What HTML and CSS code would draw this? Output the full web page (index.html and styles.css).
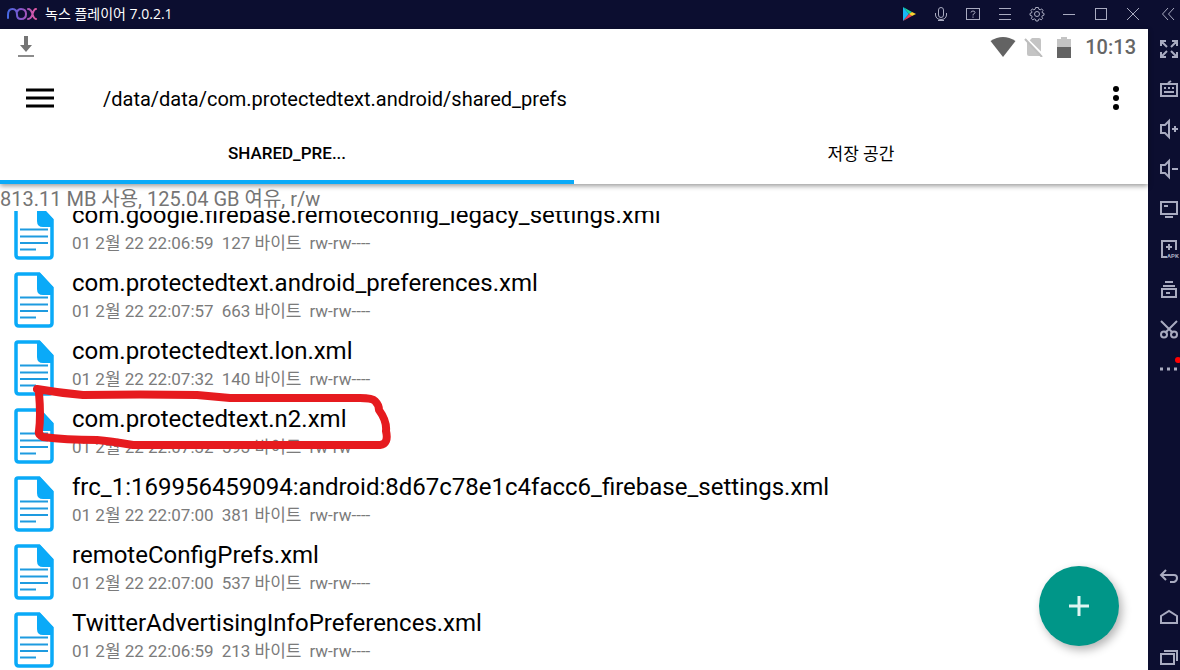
FILE: index.html
```html
<!DOCTYPE html>
<html lang="ko">
<head>
    <meta charset="UTF-8">
    <meta name="viewport" content="width=device-width, initial-scale=1.0">
    <title>녹스 플레이어</title>
    <link rel="stylesheet" href="styles.css">
</head>
<body>
    <!-- File icon shared by all rows -->
    <svg class="sprite" aria-hidden="true">
        <symbol id="file" viewBox="0 0 40 56">
            <path d="M4 2H25L38 16V51Q38 54 35 54H5Q2 54 2 51V4Q2 2 4 2Z" fill="#fff" stroke="#0aaaf8" stroke-width="3.5"/>
            <path d="M23 1H26L39 15V23H29Q23 23 23 17Z" fill="#0aaaf8"/>
            <path d="M6 25.500H34M6 32.500H34M6 39H34M6 45.500H22" stroke="#1e9be0" stroke-width="2"/>
        </symbol>
    </svg>

    <header class="titlebar">
        <svg class="logo" width="32" height="14" viewBox="0 0 32 14" fill="none" stroke="url(#nox)" stroke-width="2" stroke-linecap="round">
            <defs>
                <linearGradient id="nox" gradientUnits="userSpaceOnUse" x1="0" y1="0" x2="32" y2="0">
                    <stop offset="0" stop-color="#3f6be8"/>
                    <stop offset="0.5" stop-color="#8a55c8"/>
                    <stop offset="1" stop-color="#ee5a9c"/>
                </linearGradient>
            </defs>
            <path d="M2 11V8Q2 2 6.500 2T11 8Q11 12 15 12Q20 12 20 7T15 2Q12 2 11 5"/>
            <path d="M22 2Q25 2 26.500 7T30 12M30 2Q28 2 26.500 7T22 12"/>
        </svg>
        <h1>녹스 플레이어 7.0.2.1</h1>
        <div class="window-buttons">
            <button aria-label="Play Store">
                <svg viewBox="0 0 20 20"><path d="M4 3V17L10 10Z" fill="#18b9f5"/><path d="M4 3L13 8L10 10Z" fill="#19d6a0"/><path d="M4 17L13 12L10 10Z" fill="#ee4056"/><path d="M13 8L17 10L13 12L10 10Z" fill="#fdd42f"/></svg>
            </button>
            <button aria-label="Microphone">
                <svg viewBox="0 0 20 20"><rect x="7.500" y="3.500" width="5" height="10" rx="2.500"/><path d="M4.500 9V11Q5 15.500 10 15.500T15.500 11V9M7 16.500H13"/></svg>
            </button>
            <button aria-label="Help">
                <svg viewBox="0 0 20 20"><rect x="3.500" y="4.500" width="13" height="11"/><path d="M8 8.500Q8 7 10 7T12 8.500Q12 9.500 10 10.500V11.500M10 12.500V13.800"/></svg>
            </button>
            <button aria-label="Menu">
                <svg viewBox="0 0 20 20"><path d="M4 4.500H16M4 10.500H16M4 15.500H16"/></svg>
            </button>
            <button aria-label="Settings">
                <svg viewBox="0 0 20 20"><circle cx="10" cy="10" r="2.500"/><path d="M8.600 3.500H11.400L11.800 5.200L13.200 5.800L14.700 4.900L16 6.500L15 7.900L15.500 9L17 9.400V11.200L15.300 11.700L14.800 13L15.700 14.400L14.200 15.800L12.800 14.900L11.500 15.400L11.100 17H8.900L8.500 15.400L7.200 14.900L5.800 15.800L4.300 14.400L5.200 13L4.700 11.700L3 11.200V9.400L4.500 9L5 7.900L4 6.500L5.300 4.900L6.800 5.800L8.200 5.200Z"/></svg>
            </button>
            <button aria-label="Minimize">
                <svg viewBox="0 0 20 20"><path d="M4 10.500H16"/></svg>
            </button>
            <button aria-label="Maximize">
                <svg viewBox="0 0 20 20"><rect x="4.500" y="4.500" width="11" height="11"/></svg>
            </button>
            <button aria-label="Close">
                <svg viewBox="0 0 20 20"><path d="M4 4L16 16M16 4L4 16"/></svg>
            </button>
            <button class="collapse" aria-label="Collapse">
                <svg viewBox="0 0 20 20"><path d="M8 4L2.500 10L8 16M14 4L8.500 10L14 16"/></svg>
            </button>
        </div>
    </header>

    <div class="content">
        <main class="screen">
            <div class="appbar">
                <div class="status">
                    <svg class="download" width="18" height="24" viewBox="0 0 18 24"><path d="M7 1H11V10H15L9 17L3 10H7Z" fill="#757575"/><path d="M1 21H17" stroke="#8c8c8c" stroke-width="2"/></svg>
                    <svg class="wifi" width="26" height="20" viewBox="0 0 26 20"><path d="M0.500 4Q13 -4 25.500 4L13 20Z" fill="#636363"/></svg>
                    <svg class="nosim" width="20" height="20" viewBox="0 0 20 20"><path d="M8 1H15Q17 1 17 3V19H5Q3 19 3 17V6Z" fill="#c4c4c4"/><path d="M2 1L20 19" stroke="#fff" stroke-width="2"/><path d="M1 2L18 20" stroke="#bdbdbd" stroke-width="2"/></svg>
                    <svg class="battery" width="14" height="21" viewBox="0 0 14 21"><path d="M0 2H4V0H10V2H14V10H0Z" fill="#c4c4c4"/><path d="M0 10H14V21H0Z" fill="#636363"/></svg>
                    <time>10:13</time>
                </div>
                <div class="toolbar">
                    <button aria-label="Navigation">
                        <svg width="28" height="20" viewBox="0 0 28 20"><path d="M0 2H28M0 10H28M0 18H28" stroke="#000" stroke-width="3"/></svg>
                    </button>
                    <h2>/data/data/com.protectedtext.android/shared_prefs</h2>
                    <button aria-label="More">
                        <svg width="6" height="24" viewBox="0 0 6 24"><circle cx="3" cy="3" r="3"/><circle cx="3" cy="12" r="3"/><circle cx="3" cy="21" r="3"/></svg>
                    </button>
                </div>
                <nav class="tabs">
                    <button class="active">SHARED_PRE...</button>
                    <button>저장 공간</button>
                </nav>
            </div>

            <p class="summary">813.11 MB 사용, 125.04 GB 여유, r/w</p>

            <div class="files">
                <ul>
                    <li>
                        <svg class="file-icon"><use href="#file"/></svg>
                        <div>
                            <h3>com.google.firebase.remoteconfig_legacy_settings.xml</h3>
                            <p><span>01 2월 22 22:06:59</span><span>127 바이트</span><span>rw-rw----</span></p>
                        </div>
                    </li>
                    <li>
                        <svg class="file-icon"><use href="#file"/></svg>
                        <div>
                            <h3>com.protectedtext.android_preferences.xml</h3>
                            <p><span>01 2월 22 22:07:57</span><span>663 바이트</span><span>rw-rw----</span></p>
                        </div>
                    </li>
                    <li>
                        <svg class="file-icon"><use href="#file"/></svg>
                        <div>
                            <h3>com.protectedtext.lon.xml</h3>
                            <p><span>01 2월 22 22:07:32</span><span>140 바이트</span><span>rw-rw----</span></p>
                        </div>
                    </li>
                    <li>
                        <svg class="file-icon"><use href="#file"/></svg>
                        <div>
                            <h3>com.protectedtext.n2.xml</h3>
                            <p><span>01 2월 22 22:07:32</span><span>593 바이트</span><span>rw-rw----</span></p>
                        </div>
                        <!-- Hand-drawn marker -->
                        <svg class="marker" width="400" height="70" viewBox="0 0 400 70"><path d="M37 8Q60 12 83 14Q140 13 197 14L230 17Q290 17 360 17Q372 17 375 20Q379 24 379 29Q387 40 386 50Q389 63 380 64Q250 64 133 64Q110 60 97 59Q65 59 43 56Q38 54 39 50Q41 35 39 12"/></svg>
                    </li>
                    <li>
                        <svg class="file-icon"><use href="#file"/></svg>
                        <div>
                            <h3>frc_1:169956459094:android:8d67c78e1c4facc6_firebase_settings.xml</h3>
                            <p><span>01 2월 22 22:07:00</span><span>381 바이트</span><span>rw-rw----</span></p>
                        </div>
                    </li>
                    <li>
                        <svg class="file-icon"><use href="#file"/></svg>
                        <div>
                            <h3>remoteConfigPrefs.xml</h3>
                            <p><span>01 2월 22 22:07:00</span><span>537 바이트</span><span>rw-rw----</span></p>
                        </div>
                    </li>
                    <li>
                        <svg class="file-icon"><use href="#file"/></svg>
                        <div>
                            <h3>TwitterAdvertisingInfoPreferences.xml</h3>
                            <p><span>01 2월 22 22:06:59</span><span>213 바이트</span><span>rw-rw----</span></p>
                        </div>
                    </li>
                </ul>
            </div>

            <button class="fab" aria-label="Add">
                <svg width="20" height="20" viewBox="0 0 20 20"><path d="M10 0V20M0 10H20" stroke="#e0f5f2" stroke-width="3"/></svg>
            </button>
        </main>

        <aside class="sidebar">
            <div class="group">
                <button aria-label="Full screen">
                    <svg viewBox="0 0 20 20"><path d="M1 7V2H6M2 3L7 8M12 2H17V7M16 3L11 8M1 13V18H6M2 17L7 12M17 13V18H12M16 17L11 12"/></svg>
                </button>
                <button aria-label="Keyboard">
                    <svg viewBox="0 0 20 20"><path d="M1 5H17V17H1ZM8 4L11 2M4 9H6M8 9H10M12 9H14M4 13H14"/></svg>
                </button>
                <button aria-label="Volume up">
                    <svg viewBox="0 0 20 20"><path d="M1 6H5L9 2V18L5 14H1ZM12 10H18M15 7V13"/></svg>
                </button>
                <button aria-label="Volume down">
                    <svg viewBox="0 0 20 20"><path d="M1 6H5L9 2V18L5 14H1ZM12 10H18"/></svg>
                </button>
                <button aria-label="Screen">
                    <svg viewBox="0 0 20 20"><path d="M1 3H17V15H1ZM4 7H8M5 18H13"/></svg>
                </button>
                <button aria-label="Install APK">
                    <svg viewBox="0 0 20 20"><path d="M7 18H2V2H16V11M9 5V11M6 8H12"/><text x="7" y="19">APK</text></svg>
                </button>
                <button aria-label="Multi instance">
                    <svg viewBox="0 0 20 20"><path d="M2 10H16V18H2ZM6 14H10M3 7H15M5 3H13"/></svg>
                </button>
                <button aria-label="Screenshot">
                    <svg viewBox="0 0 20 20"><path d="M1 2L13 14M17 2L5 14"/><circle cx="4" cy="15.500" r="3"/><circle cx="14" cy="15.500" r="3"/></svg>
                </button>
                <button class="more" aria-label="More tools">
                    <svg viewBox="0 0 20 20"><path d="M0 10H3M7 10H10M14 10H17" stroke-width="3"/><circle class="dot" cx="18" cy="1" r="3"/></svg>
                </button>
            </div>
            <div class="group">
                <button aria-label="Back">
                    <svg viewBox="0 0 20 20"><path d="M6 3L1 8L6 13M1 8H14Q17 8 17 11T14 15H10"/></svg>
                </button>
                <button aria-label="Home">
                    <svg viewBox="0 0 20 20"><path d="M1 9L9 4L17 9V16H1Z"/></svg>
                </button>
                <button aria-label="Recent apps">
                    <svg viewBox="0 0 20 20"><path d="M1 7H14V17H1ZM4 4H17V14"/></svg>
                </button>
            </div>
        </aside>
    </div>
</body>
</html>
```
FILE: styles.css
```css
* {
    box-sizing: border-box;
}

body {
    display: flex;
    flex-direction: column;
    height: 100vh;
    margin: 0;
    overflow: hidden;
    background: #fff;
    font-family: Roboto, "Noto Sans CJK KR", sans-serif;
}

h1, h2, h3, p, ul {
    margin: 0;
    padding: 0;
    font-weight: 400;
}

button {
    padding: 0;
    border: 0;
    background: none;
    font-family: inherit;
    cursor: pointer;
}

svg {
    display: block;
}

.sprite {
    position: absolute;
    width: 0;
    height: 0;
}

/* Emulator title bar */
.titlebar {
    display: flex;
    align-items: center;
    flex: none;
    height: 29px;
    padding: 0 0 2px 6px;
    background: #0c0e30;
    color: #fff;
}

.titlebar h1 {
    margin-left: 7px;
    font-family: "Open Sans", "Noto Sans CJK KR", sans-serif;
    font-size: 14px;
    line-height: 20px;
}

.window-buttons {
    display: flex;
    margin-left: auto;
}

.window-buttons button {
    display: flex;
    justify-content: center;
    width: 32px;
}

.window-buttons svg {
    width: 20px;
    height: 20px;
    fill: none;
    stroke: #a9abc0;
    stroke-width: 1;
}

.window-buttons button:first-child svg {
    stroke: none;
}

.window-buttons .collapse {
    justify-content: flex-end;
    width: 31px;
}

.content {
    display: flex;
    flex: 1;
    min-height: 0;
}

.screen {
    position: relative;
    display: flex;
    flex-direction: column;
    flex: 1;
    min-width: 0;
}

.appbar {
    position: relative;
    z-index: 1;
    flex: none;
    background: #fff;
    box-shadow: 0 2px 5px rgba(0, 0, 0, 0.4);
}

.status {
    display: flex;
    align-items: center;
    height: 36px;
    padding: 0 12px 0 17px;
}

.download {
    margin-right: auto;
}

.nosim {
    margin: 0 13px 0 8px;
}

.status time {
    margin-left: 14px;
    color: #666;
    font-size: 20px;
    font-weight: 500;
}

.toolbar {
    display: flex;
    align-items: center;
    height: 66px;
    padding: 0 29px 0 26px;
}

.toolbar h2 {
    flex: 1;
    margin-left: 49px;
    padding-top: 2px;
    font-size: 20px;
}

.tabs {
    display: flex;
}

.tabs button {
    flex: 1;
    height: 53px;
    padding-bottom: 6px;
    border-bottom: 4px solid transparent;
    color: #000;
    font-size: 17px;
    font-weight: 400;
}

.tabs .active {
    border-bottom-color: #0aaaf8;
    font-weight: 500;
}

.summary {
    flex: none;
    padding-top: 3px;
    color: #757575;
    font-size: 20px;
    line-height: 24px;
}

/* File list, scrolled a little past the first row */
.files {
    flex: 1;
    min-height: 0;
    overflow: hidden;
}

.files ul {
    margin-top: -13px;
    list-style: none;
}

.files li {
    position: relative;
    display: flex;
    align-items: center;
    gap: 18px;
    height: 68px;
    padding-left: 14px;
}

.file-icon {
    width: 40px;
    height: 56px;
}

.files li div {
    padding-bottom: 10px;
}

.files h3 {
    color: #000;
    font-size: 24px;
    line-height: 32px;
}

.files li p {
    display: flex;
    gap: 8px;
    color: #7b7b7b;
    font-size: 17px;
    line-height: 24px;
}

.marker {
    position: absolute;
    top: -21px;
    left: 0;
    fill: none;
    stroke: #e61b1f;
    stroke-width: 8;
    stroke-linecap: round;
    stroke-linejoin: round;
}

.fab {
    position: absolute;
    right: 29px;
    bottom: 24px;
    z-index: 2;
    display: flex;
    align-items: center;
    justify-content: center;
    width: 80px;
    height: 80px;
    border-radius: 50%;
    background: #009688;
    box-shadow: 3px 4px 10px rgba(0, 0, 0, 0.3);
}

/* Emulator side tools */
.sidebar {
    display: flex;
    flex-direction: column;
    justify-content: space-between;
    flex: none;
    width: 32px;
    padding: 10px 0 3px;
    background: #0c0e30;
}

.group {
    display: flex;
    flex-direction: column;
    align-items: flex-end;
    gap: 20px;
}

.sidebar svg {
    width: 20px;
    height: 20px;
    overflow: visible;
    fill: none;
    stroke: #a9abc0;
    stroke-width: 2;
}

.sidebar text {
    fill: #a9abc0;
    stroke: none;
    font-size: 6px;
    font-weight: 700;
}

.sidebar .dot {
    fill: #f00;
    stroke: none;
}
```
